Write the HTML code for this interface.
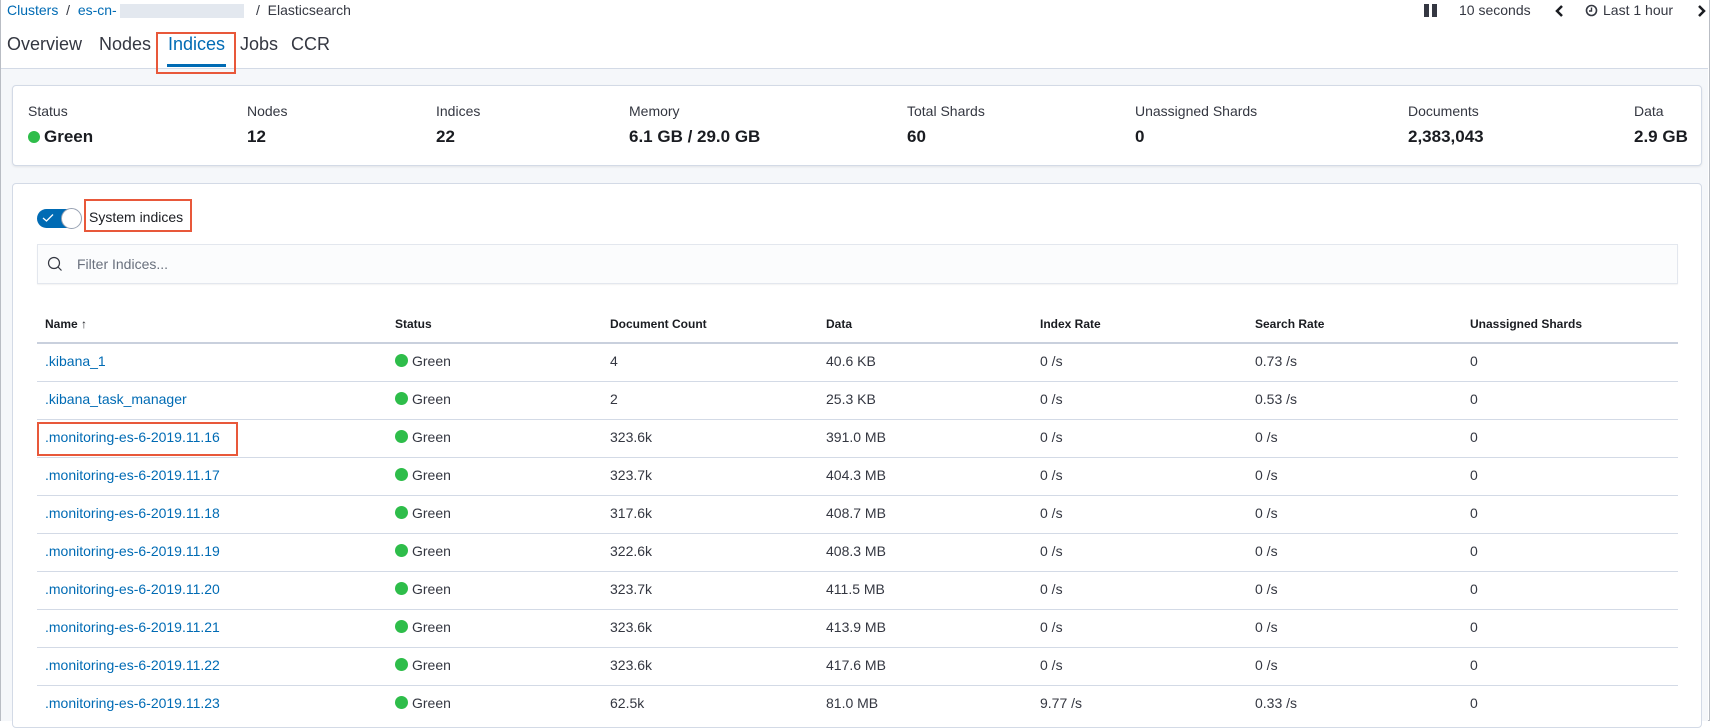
<!DOCTYPE html>
<html><head><meta charset="utf-8"><style>
*{margin:0;padding:0;box-sizing:border-box}
body{width:1710px;height:721px;overflow:hidden;background:#fff;font-family:"Liberation Sans",Arial,sans-serif;color:#343741;position:relative}
.a{position:absolute;white-space:nowrap}
.lnk{color:#006bb4}
.lbl{font-size:14px;color:#343741}
.val{font-size:17px;font-weight:bold;color:#1a1c21}
.th{font-size:12px;font-weight:bold;color:#1a1c21}
.td{font-size:14px}
.dot{display:inline-block;width:13px;height:13px;border-radius:50%;background:#2ebd4a;vertical-align:-1px;margin-right:4px}
.red{position:absolute;border:2px solid #e8583a}
.rl{position:absolute;left:37px;width:1641px;height:1px;background:#d3dae6}
</style></head><body>
<div class="a" style="left:0;top:0;width:1710px;height:721px;border:1px solid #b9bdc4;border-top:none"></div>
<div class="a" style="left:1px;top:68px;width:1707px;height:653px;background:#f5f7fa;border-top:1px solid #d3dae6"></div>

<div class="a" style="left:7px;top:2px;font-size:14px"><span class="lnk">Clusters</span> &nbsp;/&nbsp; <span class="lnk">es-cn-</span></div>
<div class="a" style="left:120px;top:4px;width:124px;height:14px;background:#e3e8ef"></div>
<div class="a" style="left:256px;top:2px;font-size:14px">/ &nbsp;Elasticsearch</div>

<div class="a" style="left:7px;top:34px;font-size:18px">Overview</div>
<div class="a" style="left:99px;top:34px;font-size:18px">Nodes</div>
<div class="a lnk" style="left:168px;top:34px;font-size:18px">Indices</div>
<div class="a" style="left:240px;top:34px;font-size:18px">Jobs</div>
<div class="a" style="left:291px;top:34px;font-size:18px">CCR</div>
<div class="a" style="left:167px;top:64px;width:59px;height:3px;background:#006bb4"></div>
<div class="red" style="left:156px;top:32px;width:80px;height:42px"></div>

<div class="a" style="left:1424px;top:4px;width:5px;height:13px;background:#343741"></div>
<div class="a" style="left:1432px;top:4px;width:5px;height:13px;background:#343741"></div>
<div class="a" style="left:1459px;top:2px;font-size:14px">10 seconds</div>
<svg class="a" style="left:1554px;top:4px" width="10" height="14"><path d="M8 2L3 7l5 5" stroke="#1a1c21" stroke-width="2.5" fill="none"/></svg>
<svg class="a" style="left:1585px;top:4px" width="13" height="13"><circle cx="6.5" cy="6.5" r="5" stroke="#343741" stroke-width="1.6" fill="none"/><path d="M6.5 3.5v3.5h-2.5" stroke="#343741" stroke-width="1.4" fill="none"/></svg>
<div class="a" style="left:1603px;top:2px;font-size:14px">Last 1 hour</div>
<svg class="a" style="left:1697px;top:4px" width="10" height="14"><path d="M2 2l5 5-5 5" stroke="#1a1c21" stroke-width="2.5" fill="none"/></svg>

<div class="a" style="left:12px;top:85px;width:1690px;height:81px;background:#fff;border:1px solid #d3dae6;border-radius:4px;box-shadow:0 1px 2px rgba(0,0,0,.08)"></div>
<div class="a lbl" style="left:28px;top:103px">Status</div>
<div class="a val" style="left:28px;top:127px"><span class="dot" style="width:12px;height:12px"></span>Green</div>
<div class="a lbl" style="left:247px;top:103px">Nodes</div><div class="a val" style="left:247px;top:127px">12</div>
<div class="a lbl" style="left:436px;top:103px">Indices</div><div class="a val" style="left:436px;top:127px">22</div>
<div class="a lbl" style="left:629px;top:103px">Memory</div><div class="a val" style="left:629px;top:127px">6.1 GB / 29.0 GB</div>
<div class="a lbl" style="left:907px;top:103px">Total Shards</div><div class="a val" style="left:907px;top:127px">60</div>
<div class="a lbl" style="left:1135px;top:103px">Unassigned Shards</div><div class="a val" style="left:1135px;top:127px">0</div>
<div class="a lbl" style="left:1408px;top:103px">Documents</div><div class="a val" style="left:1408px;top:127px">2,383,043</div>
<div class="a lbl" style="left:1634px;top:103px">Data</div><div class="a val" style="left:1634px;top:127px">2.9 GB</div>

<div class="a" style="left:12px;top:183px;width:1690px;height:545px;background:#fff;border:1px solid #d3dae6;border-radius:4px"></div>
<div class="a" style="left:37px;top:209px;width:44px;height:19px;border-radius:10px;background:#006bb4"></div>
<svg class="a" style="left:42px;top:213px" width="12" height="10"><path d="M1 5l3.5 3L11 1.5" stroke="#fff" stroke-width="1.3" fill="none"/></svg>
<div class="a" style="left:61px;top:208px;width:21px;height:21px;border-radius:50%;background:#fff;border:1px solid #98a2b3"></div>
<div class="a" style="left:89px;top:209px;font-size:14px;color:#1a1c21">System indices</div>
<div class="red" style="left:84px;top:199px;width:108px;height:33px"></div>

<div class="a" style="left:37px;top:244px;width:1641px;height:40px;background:#fbfcfd;border:1px solid #e3e7ee;box-shadow:0 1px 1px rgba(0,0,0,.05)"></div>
<svg class="a" style="left:47px;top:256px" width="16" height="16"><circle cx="7" cy="7" r="5.5" stroke="#343741" stroke-width="1.2" fill="none"/><path d="M11 11l3.5 3.5" stroke="#343741" stroke-width="1.2"/></svg>
<div class="a" style="left:77px;top:256px;font-size:14px;color:#69707d">Filter Indices...</div>

<div class="a th" style="left:45px;top:317px">Name &#8593;</div>
<div class="a th" style="left:395px;top:317px">Status</div>
<div class="a th" style="left:610px;top:317px">Document Count</div>
<div class="a th" style="left:826px;top:317px">Data</div>
<div class="a th" style="left:1040px;top:317px">Index Rate</div>
<div class="a th" style="left:1255px;top:317px">Search Rate</div>
<div class="a th" style="left:1470px;top:317px">Unassigned Shards</div>
<div class="rl" style="top:342px;height:2px;background:#c9d0dd"></div>

<div id="rows"></div>
<script>
var d=[[".kibana_1","4","40.6 KB","0 /s","0.73 /s"],[".kibana_task_manager","2","25.3 KB","0 /s","0.53 /s"],
[".monitoring-es-6-2019.11.16","323.6k","391.0 MB","0 /s","0 /s"],[".monitoring-es-6-2019.11.17","323.7k","404.3 MB","0 /s","0 /s"],
[".monitoring-es-6-2019.11.18","317.6k","408.7 MB","0 /s","0 /s"],[".monitoring-es-6-2019.11.19","322.6k","408.3 MB","0 /s","0 /s"],
[".monitoring-es-6-2019.11.20","323.7k","411.5 MB","0 /s","0 /s"],[".monitoring-es-6-2019.11.21","323.6k","413.9 MB","0 /s","0 /s"],
[".monitoring-es-6-2019.11.22","323.6k","417.6 MB","0 /s","0 /s"],[".monitoring-es-6-2019.11.23","62.5k","81.0 MB","9.77 /s","0.33 /s"]];
var h="";
d.forEach(function(r,i){var t=353+i*38;
h+='<div class="a td lnk" style="left:45px;top:'+t+'px">'+r[0]+'</div>'+
'<div class="a td" style="left:395px;top:'+t+'px"><span class="dot"></span>Green</div>'+
'<div class="a td" style="left:610px;top:'+t+'px">'+r[1]+'</div>'+
'<div class="a td" style="left:826px;top:'+t+'px">'+r[2]+'</div>'+
'<div class="a td" style="left:1040px;top:'+t+'px">'+r[3]+'</div>'+
'<div class="a td" style="left:1255px;top:'+t+'px">'+r[4]+'</div>'+
'<div class="a td" style="left:1470px;top:'+t+'px">0</div>';
if(i<9)h+='<div class="rl" style="top:'+(381+i*38)+'px"></div>';});
document.getElementById("rows").innerHTML=h;
</script>
<div class="red" style="left:37px;top:422px;width:201px;height:34px"></div>
</body></html>
